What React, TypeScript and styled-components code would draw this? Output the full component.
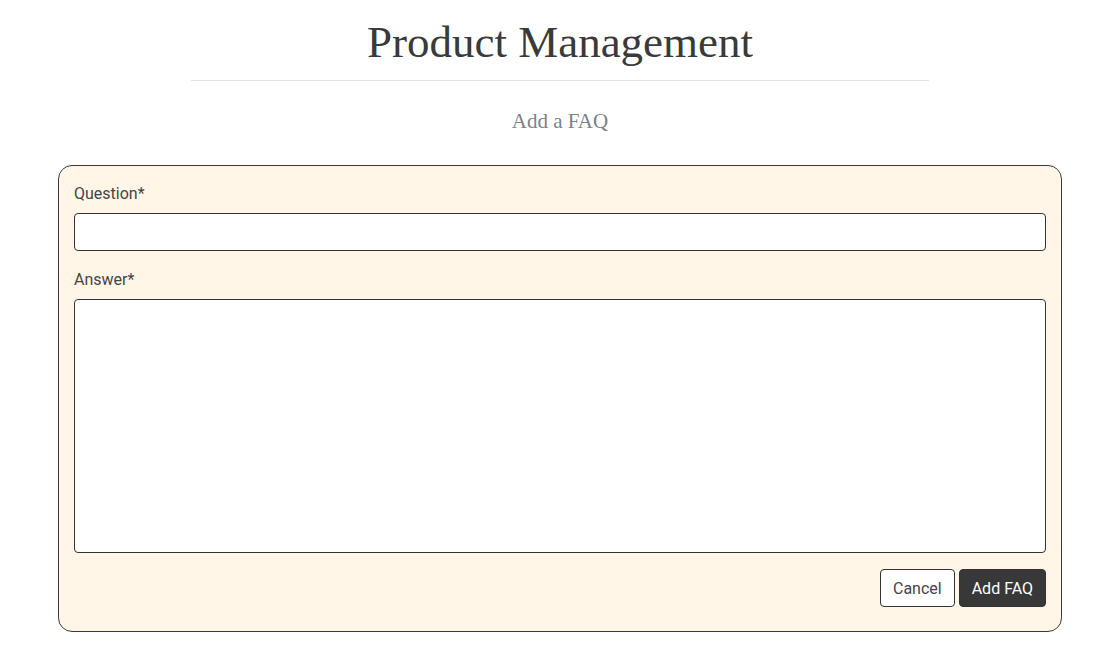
import React from "react";
import styled, { createGlobalStyle } from "styled-components";

const Global = createGlobalStyle`
  html, body { margin: 0; padding: 0; background: #fff; }
  body { font-family: Roboto, "Liberation Sans", sans-serif; color: #333; }
  * { box-sizing: border-box; }
`;

const Page = styled.div`
  display: flex;
  flex-direction: column;
  align-items: center;
  padding: 16px 0 0 24px;
`;

const Title = styled.h1`
  margin: 0;
  font-family: "Liberation Serif", "DejaVu Serif", serif;
  font-weight: 400;
  font-size: 45px;
  line-height: 52px;
  color: #3a3a3a;
`;

const Rule = styled.hr`
  width: 738px;
  margin: 12px 0 0;
  border: none;
  border-top: 1px solid #e2e2e2;
`;

const Subtitle = styled.h2`
  margin: 26px 0 0;
  font-family: "Liberation Serif", "DejaVu Serif", serif;
  font-weight: 400;
  font-size: 21px;
  line-height: 28px;
  color: #7b8089;
`;

const Card = styled.form`
  width: 1004px;
  margin-top: 30px;
  background: #fff6e7;
  border: 1px solid #3a3a3a;
  border-radius: 14px;
  padding: 16px 15px 24px;
  display: flex;
  flex-direction: column;
`;

const Label = styled.label`
  font-size: 16px;
  line-height: 24px;
  color: #444;
  margin-bottom: 7px;
`;

const Input = styled.input`
  height: 38px;
  width: 100%;
  border: 1px solid #333;
  border-radius: 4px;
  background: #fff;
  margin-bottom: 17px;
`;

const TextArea = styled.textarea`
  height: 254px;
  width: 100%;
  border: 1px solid #333;
  border-radius: 4px;
  background: #fff;
  resize: none;
  margin-bottom: 16px;
`;

const Actions = styled.div`
  display: flex;
  justify-content: flex-end;
  gap: 4px;
`;

const Button = styled.button<{ $primary?: boolean }>`
  height: 38px;
  padding: 0 12px;
  font-family: Roboto, "Liberation Sans", sans-serif;
  font-size: 16px;
  border-radius: 4px;
  border: 1px solid #333;
  background: ${(p) => (p.$primary ? "#383838" : "#fff")};
  color: ${(p) => (p.$primary ? "#fff" : "#444")};
  cursor: pointer;
`;

export default function App() {
  return (
    <>
      <Global />
      <Page>
        <Title>Product Management</Title>
        <Rule />
        <Subtitle>Add a FAQ</Subtitle>
        <Card onSubmit={(e) => e.preventDefault()}>
          <Label htmlFor="q">Question*</Label>
          <Input id="q" type="text" />
          <Label htmlFor="a">Answer*</Label>
          <TextArea id="a" />
          <Actions>
            <Button type="button">Cancel</Button>
            <Button type="submit" $primary>Add FAQ</Button>
          </Actions>
        </Card>
      </Page>
    </>
  );
}
